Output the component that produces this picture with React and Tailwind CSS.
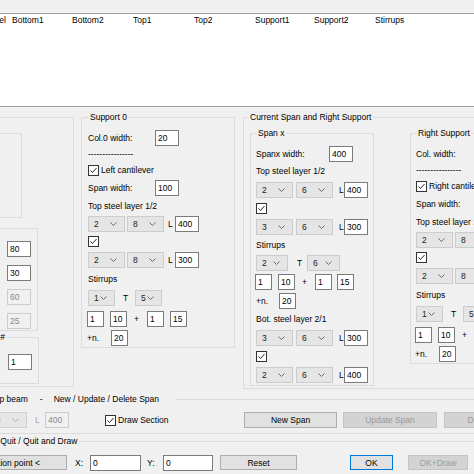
const Row = ({ className = '', children }) => (
  <div className={`flex shrink-0 items-center whitespace-nowrap ${className}`}>{children}</div>
);

const TextBox = ({ value, className = 'w-[24px]', disabled = false }) => (
  <input
    type="text"
    readOnly
    disabled={disabled}
    defaultValue={value}
    className={`h-[16px] shrink-0 border px-[2px] outline-none ${
      disabled ? 'border-[#cccccc] bg-[#f0f0f0] text-[#8a8a8a]' : 'border-[#7a7a7a] bg-white text-black'
    } ${className}`}
  />
);

const Chevron = ({ color = '#6b6b6b' }) => (
  <svg width="7" height="4" viewBox="0 0 7 4" className="shrink-0">
    <path d="M0.5 0.5 L3.5 3.5 L6.5 0.5" fill="none" stroke={color} strokeWidth="1" />
  </svg>
);

const Combo = ({ value, className = 'w-[37px]', disabled = false }) => (
  <div
    className={`flex h-[16px] shrink-0 items-center justify-between border pl-[5px] pr-[7px] ${
      disabled ? 'border-[#d0d0d0] bg-[#e6e6e6] text-[#a8a8a8]' : 'border-[#cccccc] bg-[#e5e5e5] text-[#222222]'
    } ${className}`}
  >
    <span>{value}</span>
    <Chevron color={disabled ? '#b0b0b0' : '#6b6b6b'} />
  </div>
);

const Check = () => (
  <span className="flex h-[11px] w-[11px] shrink-0 items-center justify-center border border-[#333333] bg-white">
    <svg width="9" height="9" viewBox="0 0 9 9">
      <path d="M1.5 4.5 L3.5 6.5 L7.5 2" fill="none" stroke="#222222" strokeWidth="1" />
    </svg>
  </span>
);

const Button = ({ children, className = '', disabled = false, primary = false }) => (
  <button
    type="button"
    disabled={disabled}
    className={`h-full shrink-0 border ${
      disabled
        ? 'border-[#c4c4c4] bg-[#d3d3d3] text-[#9a9a9a]'
        : primary
          ? 'border-[#0078d7] bg-[#e1e1e1] text-black'
          : 'border-[#adadad] bg-[#e1e1e1] text-black'
    } ${className}`}
  >
    {children}
  </button>
);

// two combos + L + length box
const SteelRow = ({ a, b, len, second, lCls, first = 'w-[37px]' }) => (
  <>
    <Combo value={a} className={first} />
    <Combo value={b} className={second} />
    <span className={lCls}>L</span>
    <TextBox value={len} />
  </>
);

const SupportBox = ({ title, colLabel, colValue, cantLabel, spanValue, className }) => (
  <fieldset className={`w-[154px] shrink-0 border border-[#dcdcdc] ${className}`}>
    <legend className="px-[2px] leading-[10px]">{title}</legend>
    <div className="mt-[8px] flex flex-col">
      <Row className="h-[16px]">
        <span className="w-[67px] shrink-0">{colLabel}</span>
        <TextBox value={colValue} />
      </Row>
      <Row className="h-[15px]">
        <span>----------------</span>
      </Row>
      <Row className="h-[18px]">
        <Check />
        <span className="ml-[2px]">{cantLabel}</span>
      </Row>
      <Row className="h-[18px]">
        <span className="w-[67px] shrink-0">Span width:</span>
        <TextBox value={spanValue} />
      </Row>
      <Row className="h-[17px]">
        <span>Top steel layer 1/2</span>
      </Row>
      <Row className="h-[19px]">
        <SteelRow a="2" b="8" len="400" second="ml-[2px] w-[37px]" lCls="ml-[4px] w-[7px] shrink-0" />
      </Row>
      <Row className="h-[17px]">
        <Check />
      </Row>
      <Row className="h-[20px]">
        <SteelRow a="2" b="8" len="300" second="ml-[2px] w-[37px]" lCls="ml-[4px] w-[7px] shrink-0" />
      </Row>
      <Row className="h-[17px]">
        <span>Stirrups</span>
      </Row>
      <Row className="h-[21px]">
        <Combo value="1" className="w-[27px]" />
        <span className="ml-[8px] w-[12px] shrink-0">T</span>
        <Combo value="5" className="w-[27px]" />
      </Row>
      <Row className="h-[21px]">
        <TextBox value="1" className="-ml-[1px] w-[17px]" />
        <TextBox value="10" className="ml-[6px] w-[17px]" />
        <span className="ml-[7px] w-[13px] shrink-0">+</span>
        <TextBox value="1" className="w-[17px]" />
        <TextBox value="15" className="ml-[6px] w-[17px]" />
      </Row>
      <Row className="h-[18px]">
        <span className="-ml-[1px] w-[24px] shrink-0">+n.</span>
        <TextBox value="20" className="w-[17px]" />
      </Row>
    </div>
  </fieldset>
);

const SpanBox = () => (
  <fieldset className="ml-[2px] w-[124px] shrink-0 border border-[#dcdcdc] pl-[5px]">
    <legend className="px-[2px] leading-[10px]">Span x</legend>
    <div className="mt-[8px] flex flex-col">
      <Row className="h-[16px]">
        <span className="w-[73px] shrink-0">Spanx width:</span>
        <TextBox value="400" />
      </Row>
      <Row className="h-[18px]">
        <span>Top steel layer 1/2</span>
      </Row>
      <Row className="h-[19px]">
        <SteelRow a="2" b="6" len="400" second="ml-[3px] w-[37px]" lCls="ml-[6px] w-[5px] shrink-0" />
      </Row>
      <Row className="h-[18px]">
        <Check />
      </Row>
      <Row className="h-[19px]">
        <SteelRow a="3" b="6" len="300" second="ml-[3px] w-[37px]" lCls="ml-[6px] w-[5px] shrink-0" />
      </Row>
      <Row className="h-[18px]">
        <span>Stirrups</span>
      </Row>
      <Row className="h-[18px]">
        <Combo value="2" className="w-[32px]" />
        <span className="ml-[9px] w-[10px] shrink-0">T</span>
        <Combo value="6" className="w-[33px]" />
      </Row>
      <Row className="h-[20px]">
        <TextBox value="1" className="-ml-[1px] w-[17px]" />
        <TextBox value="10" className="ml-[6px] w-[17px]" />
        <span className="ml-[7px] w-[13px] shrink-0">+</span>
        <TextBox value="1" className="w-[17px]" />
        <TextBox value="15" className="ml-[5px] w-[17px]" />
      </Row>
      <Row className="h-[18px]">
        <span className="w-[23px] shrink-0">+n.</span>
        <TextBox value="20" className="w-[17px]" />
      </Row>
      <Row className="h-[18px]">
        <span>Bot. steel layer 2/1</span>
      </Row>
      <Row className="h-[19px]">
        <SteelRow a="3" b="6" len="300" second="ml-[3px] w-[37px]" lCls="ml-[6px] w-[5px] shrink-0" />
      </Row>
      <Row className="h-[18px]">
        <Check />
      </Row>
      <Row className="h-[20px]">
        <SteelRow a="2" b="6" len="400" second="ml-[3px] w-[37px]" lCls="ml-[6px] w-[5px] shrink-0" />
      </Row>
    </div>
  </fieldset>
);

const columns = [
  { label: 'Bottom1', cls: 'w-[60px]' },
  { label: 'Bottom2', cls: 'w-[61px]' },
  { label: 'Top1', cls: 'w-[61px]' },
  { label: 'Top2', cls: 'w-[61px]' },
  { label: 'Support1', cls: 'w-[59px]' },
  { label: 'Support2', cls: 'w-[61px]' },
  { label: 'Stirrups', cls: 'w-[61px]' }
];

export default function App() {
  return (
    <div className="h-[474px] w-[474px] overflow-hidden bg-[#f0f0f0] font-['Liberation_Sans',Arial,sans-serif] text-[8.5px] leading-[10px] text-black">
      {/* spans list */}
      <div className="h-[13px]" />
      <div className="h-[94px] border-y border-[#a0a0a0] bg-white">
        <div className="flex h-[12px] items-center whitespace-nowrap">
          <div className="flex w-[12px] shrink-0 justify-end overflow-hidden pr-[6px]">
            <span>Label</span>
          </div>
          {columns.map((col) => (
            <span key={col.label} className={`shrink-0 ${col.cls}`}>
              {col.label}
            </span>
          ))}
        </div>
      </div>

      {/* section / supports / current span */}
      <div className="flex items-start">
        <div className="-ml-[61px] mt-[10px] w-[135px] shrink-0 border border-[#dcdcdc] pb-[2px] pl-[5px] pt-[15px]">
          <div className="h-[85px] w-[77px] border border-[#dcdcdc]" />
          <div className="mt-[10px] flex h-[103px] w-[93px] flex-col items-end gap-[8px] border border-[#dcdcdc] pr-[6px] pt-[12px]">
            <TextBox value="80" />
            <TextBox value="30" />
            <TextBox value="60" disabled />
            <TextBox value="25" disabled />
          </div>
          <fieldset className="mt-[1px] w-[94px] border border-[#dcdcdc] pb-[13px] pr-[6px]">
            <legend className="ml-[30px] px-[2px] leading-[10px]">Span #</legend>
            <div className="mt-[12px] flex justify-end">
              <TextBox value="1" />
            </div>
          </fieldset>
        </div>

        <SupportBox
          title="Support 0"
          colLabel="Col.0 width:"
          colValue="20"
          cantLabel="Left cantilever"
          spanValue="100"
          className="ml-[7px] mt-[5px] pl-[6px]"
        />

        <fieldset className="ml-[8px] mt-[5px] w-[420px] shrink-0 border border-[#dcdcdc] pb-[2px] pl-[4px]">
          <legend className="px-[2px] leading-[10px]">Current Span and Right Support</legend>
          <div className="mt-[6px] flex items-start">
            <SpanBox />
            <SupportBox
              title="Right Support"
              colLabel="Col. width:"
              colValue="20"
              cantLabel="Right cantilever"
              spanValue="100"
              className="ml-[36px] pl-[5px]"
            />
          </div>
        </fieldset>
      </div>

      {/* new / update / delete span */}
      <fieldset className="-ml-[40px] mt-[5px] w-[600px] border border-[#dcdcdc] pb-[5px]">
        <legend className="ml-[19px] whitespace-nowrap pl-[2px] pr-[17px] leading-[10px]">
          <span>Setup beam</span>
          <span className="ml-[12px]">-</span>
          <span className="ml-[11px]">New / Update / Delete Span</span>
        </legend>
        <Row className="mt-[8px] h-[16px]">
          <Combo value="8" disabled className="ml-[29px] w-[37px]" />
          <span className="ml-[8px] w-[10px] shrink-0 text-[#a8a8a8]">L</span>
          <TextBox value="400" disabled />
          <div className="ml-[36px] flex w-[139px] shrink-0 items-center">
            <Check />
            <span className="ml-[2px]">Draw Section</span>
          </div>
          <Button className="w-[93px]">New Span</Button>
          <Button disabled className="ml-[6px] w-[94px]">
            Update Span
          </Button>
          <Button disabled className="ml-[7px] w-[94px]">
            Delete Span
          </Button>
        </Row>
      </fieldset>

      {/* ok / quit */}
      <fieldset className="-ml-[50px] mt-[2px] w-[600px] border border-[#dcdcdc] pb-[20px]">
        <legend className="ml-[28px] px-[2px] leading-[10px]">OK / Quit / Quit and Draw</legend>
        <Row className="mt-[9px] h-[15px]">
          <Button className="ml-[1px] w-[115px]">Insertion point &lt;</Button>
          <span className="w-[23px] shrink-0 pl-[8px]">X:</span>
          <TextBox value="0" className="h-[15px] w-[51px]" />
          <span className="w-[22px] shrink-0 pl-[6px]">Y:</span>
          <TextBox value="0" className="h-[15px] w-[50px]" />
          <Button className="ml-[7px] w-[77px]">Reset</Button>
          <Button primary className="ml-[53px] w-[43px]">
            OK
          </Button>
          <Button disabled className="ml-[15px] w-[60px]">
            OK+Draw
          </Button>
        </Row>
      </fieldset>
    </div>
  );
}
